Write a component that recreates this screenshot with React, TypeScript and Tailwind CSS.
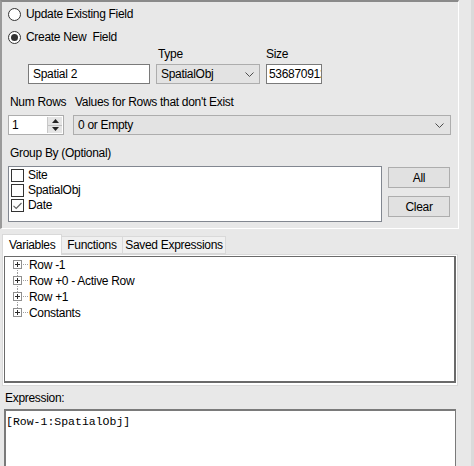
import React from "react";

const ui: React.CSSProperties = { fontFamily: '"Liberation Sans", Arial, sans-serif' };

function Chevron() {
  return (
    <svg width="9" height="5" viewBox="0 0 9 5">
      <polyline points="0.5,0.5 4.5,4.5 8.5,0.5" fill="none" stroke="#4d4d4d" strokeWidth="1" />
    </svg>
  );
}

function Radio({ checked }: { checked?: boolean }) {
  return (
    <span className="flex h-[13px] w-[13px] shrink-0 items-center justify-center rounded-full border border-[#333333] bg-white">
      {checked && <span className="h-[7px] w-[7px] rounded-full bg-[#333333]" />}
    </span>
  );
}

function Check({ checked }: { checked?: boolean }) {
  return (
    <span className="flex h-[13px] w-[13px] shrink-0 items-center justify-center border border-[#333333] bg-white">
      {checked && (
        <svg width="9" height="8" viewBox="0 0 9 8">
          <polyline points="0.5,3.8 3.2,6.5 8.5,1" fill="none" stroke="#606060" strokeWidth="1.1" />
        </svg>
      )}
    </span>
  );
}

function TreeRow({ label, first, last }: { label: string; first?: boolean; last?: boolean }) {
  return (
    <div className="flex h-[16px] items-center">
      <svg width="24" height="16" viewBox="0 0 24 16" className="shrink-0">
        {!first && <line x1="12.5" y1="0" x2="12.5" y2="3" stroke="#a0a0a0" strokeDasharray="1 1" />}
        {!last && <line x1="12.5" y1="13" x2="12.5" y2="16" stroke="#a0a0a0" strokeDasharray="1 1" />}
        <rect x="8.5" y="3.5" width="8" height="8" fill="white" stroke="#8f8f8f" />
        <line x1="10" y1="7.5" x2="15" y2="7.5" stroke="#2b2b2b" />
        <line x1="12.5" y1="5" x2="12.5" y2="10" stroke="#2b2b2b" />
        <line x1="18" y1="7.5" x2="24" y2="7.5" stroke="#a0a0a0" strokeDasharray="1 1" />
      </svg>
      <span className="text-[12px] leading-none text-black">{label}</span>
    </div>
  );
}

export default function App() {
  return (
    <div
      className="flex h-[466px] w-[474px] overflow-hidden bg-[#e8e8e8] text-[12px] tracking-[-0.3px] text-black"
      style={ui}
    >
      <div className="flex w-[459px] shrink-0 flex-col">
        {/* Top group */}
        <div className="flex h-[229px] shrink-0 flex-col border-t-2 border-l-2 border-r border-b border-t-[#8a8a8a] border-l-[#9a9a9a] border-r-white border-b-white">
          <div className="mt-[4px] flex h-[16px] items-center gap-[5px] pl-[6px]">
            <Radio />
            <span className="leading-none">Update Existing Field</span>
          </div>
          <div className="mt-[7px] flex h-[16px] items-center gap-[5px] pl-[6px]">
            <Radio checked />
            <span className="whitespace-pre leading-none">Create New  Field</span>
          </div>
          <div className="mt-[2px] flex h-[14px] items-center pl-[154px]">
            <span className="w-[110px] pl-[2px] leading-none">Type</span>
            <span className="leading-none">Size</span>
          </div>
          <div className="mt-[3px] flex h-[20px] gap-[6px] pl-[26px]">
            <div className="flex w-[122px] items-center border border-[#7a7a7a] bg-white pl-[4px]">
              <span className="leading-none">Spatial 2</span>
            </div>
            <div className="flex w-[104px] items-center justify-between border border-[#adadad] bg-[#e3e3e3] pl-[4px] pr-[5px]">
              <span className="leading-none">SpatialObj</span>
              <Chevron />
            </div>
            <div className="flex w-[56px] items-center overflow-hidden border border-[#7a7a7a] bg-white pl-[2px]">
              <span className="whitespace-nowrap leading-none">536870912</span>
            </div>
          </div>
          <div className="mt-[11px] flex h-[14px] items-center">
            <span className="w-[73px] pl-[8px] leading-none">Num Rows</span>
            <span className="leading-none">Values for Rows that don't Exist</span>
          </div>
          <div className="mt-[6px] flex h-[20px] gap-[9px] pl-[6px]">
            <div className="flex w-[56px] items-stretch border border-[#adadad] bg-white">
              <span className="flex flex-1 items-center pl-[3px] leading-none">1</span>
              <div className="my-[1px] mr-[1px] flex w-[15px] flex-col border-l border-[#c8c8c8] bg-[#e5e5e5]">
                <div className="flex flex-1 items-center justify-center border-b border-[#c0c0c0]">
                  <svg width="7" height="4" viewBox="0 0 7 4">
                    <polygon points="3.5,0 7,4 0,4" fill="#222" />
                  </svg>
                </div>
                <div className="flex flex-1 items-center justify-center">
                  <svg width="7" height="4" viewBox="0 0 7 4">
                    <polygon points="0,0 7,0 3.5,4" fill="#222" />
                  </svg>
                </div>
              </div>
            </div>
            <div className="flex w-[378px] items-center justify-between border border-[#adadad] bg-[#e3e3e3] pl-[4px] pr-[6px]">
              <span className="leading-none">0 or Empty</span>
              <Chevron />
            </div>
          </div>
          <div className="mt-[11px] flex h-[14px] items-center pl-[8px]">
            <span className="leading-none">Group By (Optional)</span>
          </div>
          <div className="mt-[6px] flex gap-[6px] pl-[6px]">
            <div className="flex h-[56px] w-[374px] flex-col border border-[#828790] bg-white pl-[2px] pt-[2px]">
              {[
                ["Site", false],
                ["SpatialObj", false],
                ["Date", true],
              ].map(([label, c]) => (
                <div key={label as string} className="flex h-[15px] items-start gap-[4px]">
                  <Check checked={c as boolean} />
                  <span className="leading-[13px]">{label as string}</span>
                </div>
              ))}
            </div>
            <div className="mt-[1px] flex flex-col gap-[8px]">
              <div className="flex h-[21px] w-[62px] items-center justify-center border border-[#adadad] bg-[#e1e1e1]">
                <span className="leading-none">All</span>
              </div>
              <div className="flex h-[21px] w-[62px] items-center justify-center border border-[#adadad] bg-[#e1e1e1]">
                <span className="leading-none">Clear</span>
              </div>
            </div>
          </div>
        </div>

        {/* Tabs */}
        <div className="mt-[5px] flex h-[20px] items-end pl-[2px]">
          <div className="relative z-10 -mb-[1px] flex h-[21px] w-[60px] items-center border border-b-0 border-[#d9d9d9] bg-white pl-[6px]">
            <span className="leading-none">Variables</span>
          </div>
          <div className="flex h-[18px] w-[61px] items-center justify-center border border-l-0 border-[#d9d9d9] bg-[#f0f0f0]">
            <span className="leading-none">Functions</span>
          </div>
          <div className="flex h-[18px] w-[103px] items-center justify-center border border-l-0 border-[#d9d9d9] bg-[#f0f0f0]">
            <span className="leading-none">Saved Expressions</span>
          </div>
        </div>
        <div className="ml-[2px] flex h-[132px] w-[456px] flex-col border border-[#d9d9d9] bg-white px-[1px] pb-[2px] pt-[1px]">
          <div className="flex h-[127px] flex-col border border-[#6a6a6a] border-r-2 border-b-2 bg-white">
            <TreeRow label="Row -1" first />
            <TreeRow label="Row +0 - Active Row" />
            <TreeRow label="Row +1" />
            <TreeRow label="Constants" last />
          </div>
        </div>

        {/* Expression */}
        <div className="mt-[6px] flex h-[14px] items-center pl-[5px]">
          <span className="leading-none">Expression:</span>
        </div>
        <div
          className="ml-[4px] mt-[5px] h-[60px] w-[452px] shrink-0 border-l-2 border-t-2 border-r border-[#7a7a7a] bg-white pl-0 pt-[2px]"
          style={{ fontFamily: '"Liberation Mono", "DejaVu Sans Mono", monospace' }}
        >
          <span className="text-[11.5px] leading-none tracking-normal">[Row-1:SpatialObj]</span>
        </div>
      </div>
      <div className="w-[12px] shrink-0" />
      <div className="w-[3px] shrink-0 bg-[#dadada]" />
    </div>
  );
}
